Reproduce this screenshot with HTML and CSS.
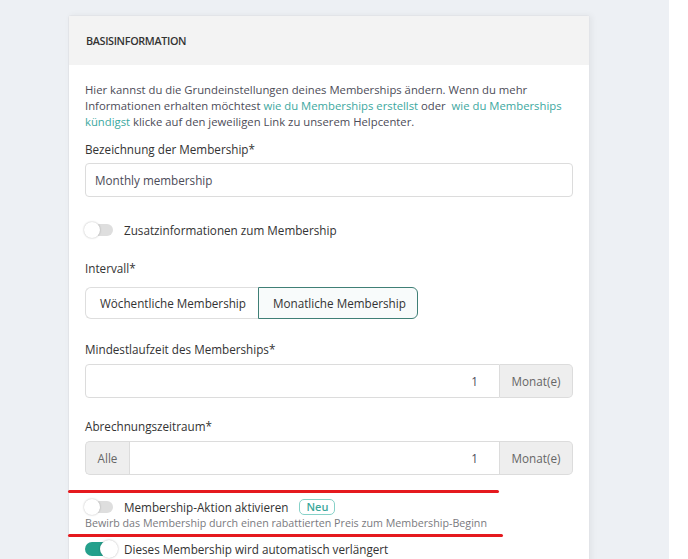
FILE: index.html
```html
<!DOCTYPE html>
<html lang="de">
<head>
<meta charset="utf-8">
<link rel="stylesheet" href="styles.css">
</head>
<body>
<div class="page">
  <div class="card">
    <div class="card-header">BASISINFORMATION</div>
    <div class="card-body">
      <p class="intro">Hier kannst du die Grundeinstellungen deines Memberships ändern. Wenn du mehr Informationen erhalten möchtest <a href="#">wie du Memberships erstellst</a> oder &nbsp;<a href="#">wie du Memberships kündigst</a> klicke auf den jeweiligen Link zu unserem Helpcenter.</p>

      <div class="label">Bezeichnung der Membership*</div>
      <div class="input text-input">Monthly membership</div>

      <div class="toggle-row first-toggle">
        <span class="toggle"></span>
        <span class="toggle-text">Zusatzinformationen zum Membership</span>
      </div>

      <div class="label spaced">Intervall*</div>
      <div class="btn-group">
        <span class="btn">Wöchentliche Membership</span>
        <span class="btn active">Monatliche Membership</span>
      </div>

      <div class="label spaced2">Mindestlaufzeit des Memberships*</div>
      <div class="input-group">
        <span class="field">1</span>
        <span class="addon right">Monat(e)</span>
      </div>

      <div class="label spaced">Abrechnungszeitraum*</div>
      <div class="input-group">
        <span class="addon left">Alle</span>
        <span class="field">1</span>
        <span class="addon right">Monat(e)</span>
      </div>

      <div class="toggle-row promo">
        <span class="toggle"></span>
        <span class="toggle-text">Membership-Aktion aktivieren</span>
        <span class="badge">Neu</span>
      </div>
      <div class="help">Bewirb das Membership durch einen rabattierten Preis zum Membership-Beginn</div>

      <div class="toggle-row last">
        <span class="toggle on"></span>
        <span class="toggle-text">Dieses Membership wird automatisch verlängert</span>
      </div>
    </div>
    <span class="mark mark-1"></span>
    <span class="mark mark-2"></span>
  </div>
  <span class="dot"></span>
</div>
</body>
</html>
```

FILE: styles.css
```css
* { box-sizing: border-box; }
html, body {
  margin: 0;
  padding: 0;
  background: #ffffff;
  font-family: "Open Sans", "Noto Sans", sans-serif;
  font-size: 11.7px;
  color: #4a4a55;
}
.page {
  position: relative;
  width: 669px;
  height: 559px;
  background: #edf0f4;
  padding: 15px 0 0 68px;
  overflow: hidden;
}
.card {
  position: relative;
  width: 522px;
  background: #ffffff;
  border: 1px solid #e2e4e8;
  border-radius: 3px;
  box-shadow: 2px 0 6px rgba(0,0,0,0.05);
}
.card-header {
  height: 49px;
  background: #f3f3f3;
  padding: 0 17px;
  display: flex;
  align-items: center;
  font-size: 10.8px;
  font-weight: 600;
  color: #333;
  letter-spacing: -0.35px;
}
.card-body {
  padding: 17px 16px 0 16px;
  height: 500px;
}
.intro {
  margin: 0;
  font-size: 11.3px;
  line-height: 16px;
  color: #4c4c58;
}
.intro a {
  color: #3ca8a0;
  text-decoration: none;
}
.label {
  margin-top: 11px;
  line-height: 16px;
  color: #333;
  font-weight: 500;
}
.label.spaced { margin-top: 20px; }
.label.spaced2 { margin-top: 22px; }
.input {
  margin-top: 6px;
  height: 34px;
  border: 1px solid #dcdcdc;
  border-radius: 4px;
  display: flex;
  align-items: center;
  padding: 0 9px;
  color: #4c4c58;
}
.toggle-row {
  display: flex;
  align-items: center;
  height: 20px;
}
.first-toggle { margin-top: 23px; }
.toggle {
  position: relative;
  display: inline-block;
  width: 28px;
  height: 12px;
  border-radius: 6px;
  background: #dedede;
  margin-right: 11px;
  flex: none;
}
.toggle::after {
  content: "";
  position: absolute;
  left: -1px;
  top: -2px;
  width: 16px;
  height: 16px;
  border-radius: 50%;
  background: #fff;
  box-shadow: 0 0 2px rgba(0,0,0,0.3);
}
.toggle.on {
  width: 32px;
  height: 14px;
  border-radius: 7px;
  background: #25a08c;
  margin-right: 7px;
}
.toggle.on::after {
  left: auto;
  right: -1px;
  top: -2px;
  width: 18px;
  height: 18px;
}
.toggle-text {
  color: #333;
  font-weight: 500;
}
.btn-group {
  margin-top: 11px;
  display: flex;
}
.btn {
  height: 32px;
  display: flex;
  align-items: center;
  padding: 0 14px;
  border: 1px solid #dedede;
  color: #333;
  font-weight: 500;
  white-space: nowrap;
}
.btn:first-child {
  border-radius: 6px 0 0 6px;
  border-right: none;
  width: 173px;
}
.btn.active {
  border: 1px solid #3f7f76;
  background: #f8fbfb;
  border-radius: 0 6px 6px 0;
  width: 160px;
}
.input-group {
  margin-top: 7px;
  display: flex;
  height: 34px;
}
.field {
  flex: 1;
  border: 1px solid #dcdcdc;
  display: flex;
  align-items: center;
  justify-content: flex-end;
  padding: 0 21px;
  color: #4c4c58;
}
.addon {
  display: flex;
  align-items: center;
  justify-content: center;
  background: #eeeeee;
  border: 1px solid #dcdcdc;
  color: #666;
}
.addon.right {
  width: 73px;
  border-left: none;
  border-radius: 0 5px 5px 0;
}
.addon.left {
  width: 44px;
  border-right: none;
  border-radius: 5px 0 0 5px;
}
.input-group .field:first-child { border-radius: 4px 0 0 4px; }
.promo { margin-top: 23px; height: 18px; }
.badge {
  margin-left: 11px;
  border: 1.5px solid #86d1c8;
  color: #3ca89c;
  border-radius: 5px;
  padding: 0 6px;
  font-size: 11px;
  line-height: 14px;
  font-weight: 600;
}
.help {
  font-size: 10.7px;
  line-height: 14px;
  color: #7a7a80;
}
.last { margin-top: 10px; height: 18px; }
.mark {
  position: absolute;
  height: 3px;
  background: #e5191e;
  border-radius: 2px;
  left: -1px;
}
.mark-1 { top: 474px; width: 431px; }
.mark-2 { top: 518px; width: 435px; }
.dot {
  position: absolute;
  left: 684px;
  top: 366px;
  width: 3px;
  height: 3px;
  border-radius: 50%;
  background: #e5191e;
}
```
